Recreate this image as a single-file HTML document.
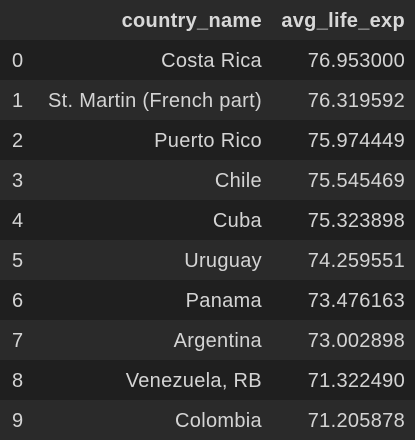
<!DOCTYPE html><html><head><style>
body{margin:0;background:#1f1f1f;width:415px;height:438px;overflow:hidden;font-family:"Liberation Sans",sans-serif;color:#d4d4d4;font-size:20px;letter-spacing:0.3px}
table{border-collapse:collapse;width:415px}
td,th{padding:0;padding-top:3px;height:37px;white-space:nowrap;box-sizing:content-box}
th{font-weight:bold;text-align:right;background:#2a2a2a;color:#d8d8d8}
tr:nth-child(odd) td{background:#1f1f1f}
tr:nth-child(even) td{background:#2a2a2a}
.i{width:36px;padding-left:12px;text-align:left}
.c{text-align:right;padding-right:0;width:213px}
.a{text-align:right;padding-right:10px}
</style></head><body><table>
<thead><tr><th class="i"></th><th class="c">country_name</th><th class="a">avg_life_exp</th></tr></thead>
<tbody>
<tr><td class="i">0</td><td class="c">Costa Rica</td><td class="a">76.953000</td></tr>
<tr><td class="i">1</td><td class="c">St. Martin (French part)</td><td class="a">76.319592</td></tr>
<tr><td class="i">2</td><td class="c">Puerto Rico</td><td class="a">75.974449</td></tr>
<tr><td class="i">3</td><td class="c">Chile</td><td class="a">75.545469</td></tr>
<tr><td class="i">4</td><td class="c">Cuba</td><td class="a">75.323898</td></tr>
<tr><td class="i">5</td><td class="c">Uruguay</td><td class="a">74.259551</td></tr>
<tr><td class="i">6</td><td class="c">Panama</td><td class="a">73.476163</td></tr>
<tr><td class="i">7</td><td class="c">Argentina</td><td class="a">73.002898</td></tr>
<tr><td class="i">8</td><td class="c">Venezuela, RB</td><td class="a">71.322490</td></tr>
<tr><td class="i">9</td><td class="c">Colombia</td><td class="a">71.205878</td></tr>
</tbody></table></body></html>
